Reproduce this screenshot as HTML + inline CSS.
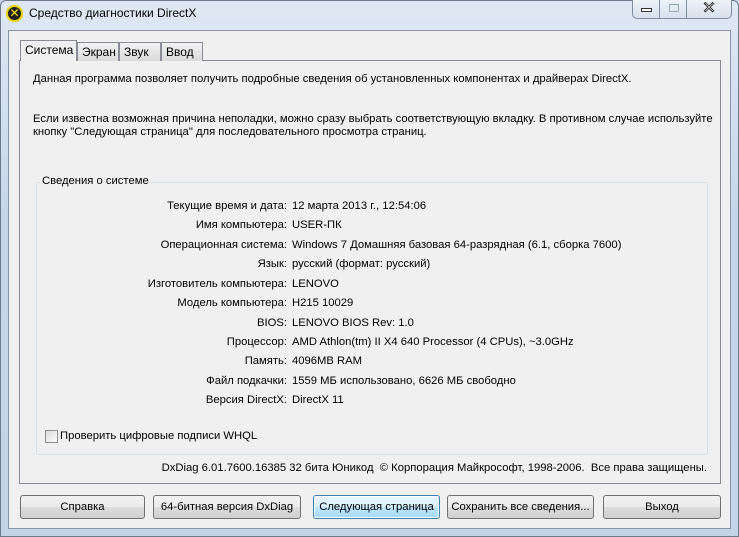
<!DOCTYPE html>
<html><head><meta charset="utf-8"><style>
*{margin:0;padding:0;box-sizing:border-box}
body{width:739px;height:537px;overflow:hidden;background:#c9d7e8;font-family:"Liberation Sans","DejaVu Sans",sans-serif;font-size:11.25px;color:#000;position:relative}
.frame{position:absolute;left:0;top:0;width:739px;height:537px;background:linear-gradient(#dfe8f3,#c6d6ea 40%,#c3d3e8);border:1px solid #6c7a8c;border-radius:6px 6px 0 0}
.title{position:absolute;left:29px;top:6px;font-size:12px;color:#000}
.icon{position:absolute;left:6px;top:5px;width:17px;height:17px;border-radius:50%;background:#222;border:2px solid #e8d400;color:#ffe800;font-size:12px;font-weight:bold;line-height:13px;text-align:center}
.ctl{position:absolute;top:0;height:19px;border:1px solid #7f8ea3;border-top:none;background:linear-gradient(#eef3f9,#d7e1ed)}
.client{position:absolute;left:8px;top:30px;width:723px;height:499px;background:#f0f0f0;border:1px solid #8796a8}
.panel{position:absolute;left:19px;top:60px;width:702px;height:424px;background:#f0f0f0;border:1px solid #898c95}
.tab{position:absolute;top:42px;height:19px;border:1px solid #898c95;border-bottom:none;background:linear-gradient(#f2f2f2,#dadada);padding:2px 4px 0;font-size:12px}
.tab.a{top:40px;height:21px;background:#f0f0f0;z-index:2}
.t{position:absolute;white-space:nowrap}
.gb{position:absolute;left:36px;top:182px;width:672px;height:273px;border:1px solid #d5dfe5;border-radius:3px}
.gl{position:absolute;left:40px;top:175px;background:#f0f0f0;padding:0 2px}
.lbl{position:absolute;right:452px;text-align:right;white-space:nowrap}
.val{position:absolute;left:292px;white-space:nowrap}
.btn{position:absolute;top:495px;height:24px;border:1px solid #707070;border-radius:3px;background:linear-gradient(#f2f2f2 0,#ebebeb 50%,#dddddd 51%,#cfcfcf);text-align:center;line-height:22px;font-size:11.25px}
.btn.f{border-color:#3c7fb1;background:linear-gradient(#eaf6fd,#d9f0fc 50%,#bee6fd 51%,#a7d9f5);box-shadow:inset 0 0 0 1px #fff}
.cb{position:absolute;left:45px;top:430px;width:13px;height:13px;border:1px solid #8f8f8f;background:linear-gradient(135deg,#dcdcdc,#fbfbfb)}
</style></head><body>
<div class="frame"></div>
<div class="icon">✕</div>
<div class="title">Средство диагностики DirectX</div>
<div class="ctl" style="left:632px;width:28px;border-radius:0 0 0 5px"><div style="position:absolute;left:8px;top:8px;width:11px;height:4px;border:1px solid #333;background:#fff"></div></div>
<div class="ctl" style="left:659px;width:28px"><div style="position:absolute;left:9px;top:4px;width:10px;height:8px;border:1px solid #9aa;"></div></div>
<div class="ctl" style="left:686px;width:46px;border-radius:0 0 5px 0;text-align:center;font-size:16px;font-weight:bold;color:#fff;-webkit-text-stroke:1px #333;line-height:17px">✕</div>
<div class="client"></div>
<div class="panel"></div>
<div class="tab a" style="left:20px;width:57px">Система</div>
<div class="tab" style="left:77px;width:42px">Экран</div>
<div class="tab" style="left:119px;width:42px">Звук</div>
<div class="tab" style="left:161px;width:42px">Ввод</div>
<div class="t" style="left:33px;top:73px">Данная программа позволяет получить подробные сведения об установленных компонентах и драйверах DirectX.</div>
<div class="t" style="left:33px;top:113px">Если известна возможная причина неполадки, можно сразу выбрать соответствующую вкладку. В противном случае используйте</div>
<div class="t" style="left:33px;top:126px">кнопку "Следующая страница" для последовательного просмотра страниц.</div>
<div class="gb"></div>
<div class="gl">Сведения о системе</div>
<div class="lbl" style="top:200px">Текущие время и дата:</div><div class="val" style="top:200px">12 марта 2013 г., 12:54:06</div>
<div class="lbl" style="top:219px">Имя компьютера:</div><div class="val" style="top:219px">USER-ПК</div>
<div class="lbl" style="top:239px">Операционная система:</div><div class="val" style="top:239px">Windows 7 Домашняя базовая 64-разрядная (6.1, сборка 7600)</div>
<div class="lbl" style="top:258px">Язык:</div><div class="val" style="top:258px">русский (формат: русский)</div>
<div class="lbl" style="top:278px">Изготовитель компьютера:</div><div class="val" style="top:278px">LENOVO</div>
<div class="lbl" style="top:297px">Модель компьютера:</div><div class="val" style="top:297px">H215 10029</div>
<div class="lbl" style="top:317px">BIOS:</div><div class="val" style="top:317px">LENOVO BIOS Rev: 1.0</div>
<div class="lbl" style="top:336px">Процессор:</div><div class="val" style="top:336px">AMD Athlon(tm) II X4 640 Processor (4 CPUs), ~3.0GHz</div>
<div class="lbl" style="top:355px">Память:</div><div class="val" style="top:355px">4096MB RAM</div>
<div class="lbl" style="top:375px">Файл подкачки:</div><div class="val" style="top:375px">1559 МБ использовано, 6626 МБ свободно</div>
<div class="lbl" style="top:394px">Версия DirectX:</div><div class="val" style="top:394px">DirectX 11</div>
<div class="cb"></div>
<div class="t" style="left:60px;top:430px">Проверить цифровые подписи WHQL</div>
<div class="t" style="right:32px;top:462px">DxDiag 6.01.7600.16385 32 бита Юникод &nbsp;© Корпорация Майкрософт, 1998-2006. &nbsp;Все права защищены.</div>
<div class="btn" style="left:20px;width:125px">Справка</div>
<div class="btn" style="left:153px;width:148px">64-битная версия DxDiag</div>
<div class="btn f" style="left:313px;width:127px">Следующая страница</div>
<div class="btn" style="left:447px;width:147px">Сохранить все сведения...</div>
<div class="btn" style="left:603px;width:118px">Выход</div>
</body></html>
